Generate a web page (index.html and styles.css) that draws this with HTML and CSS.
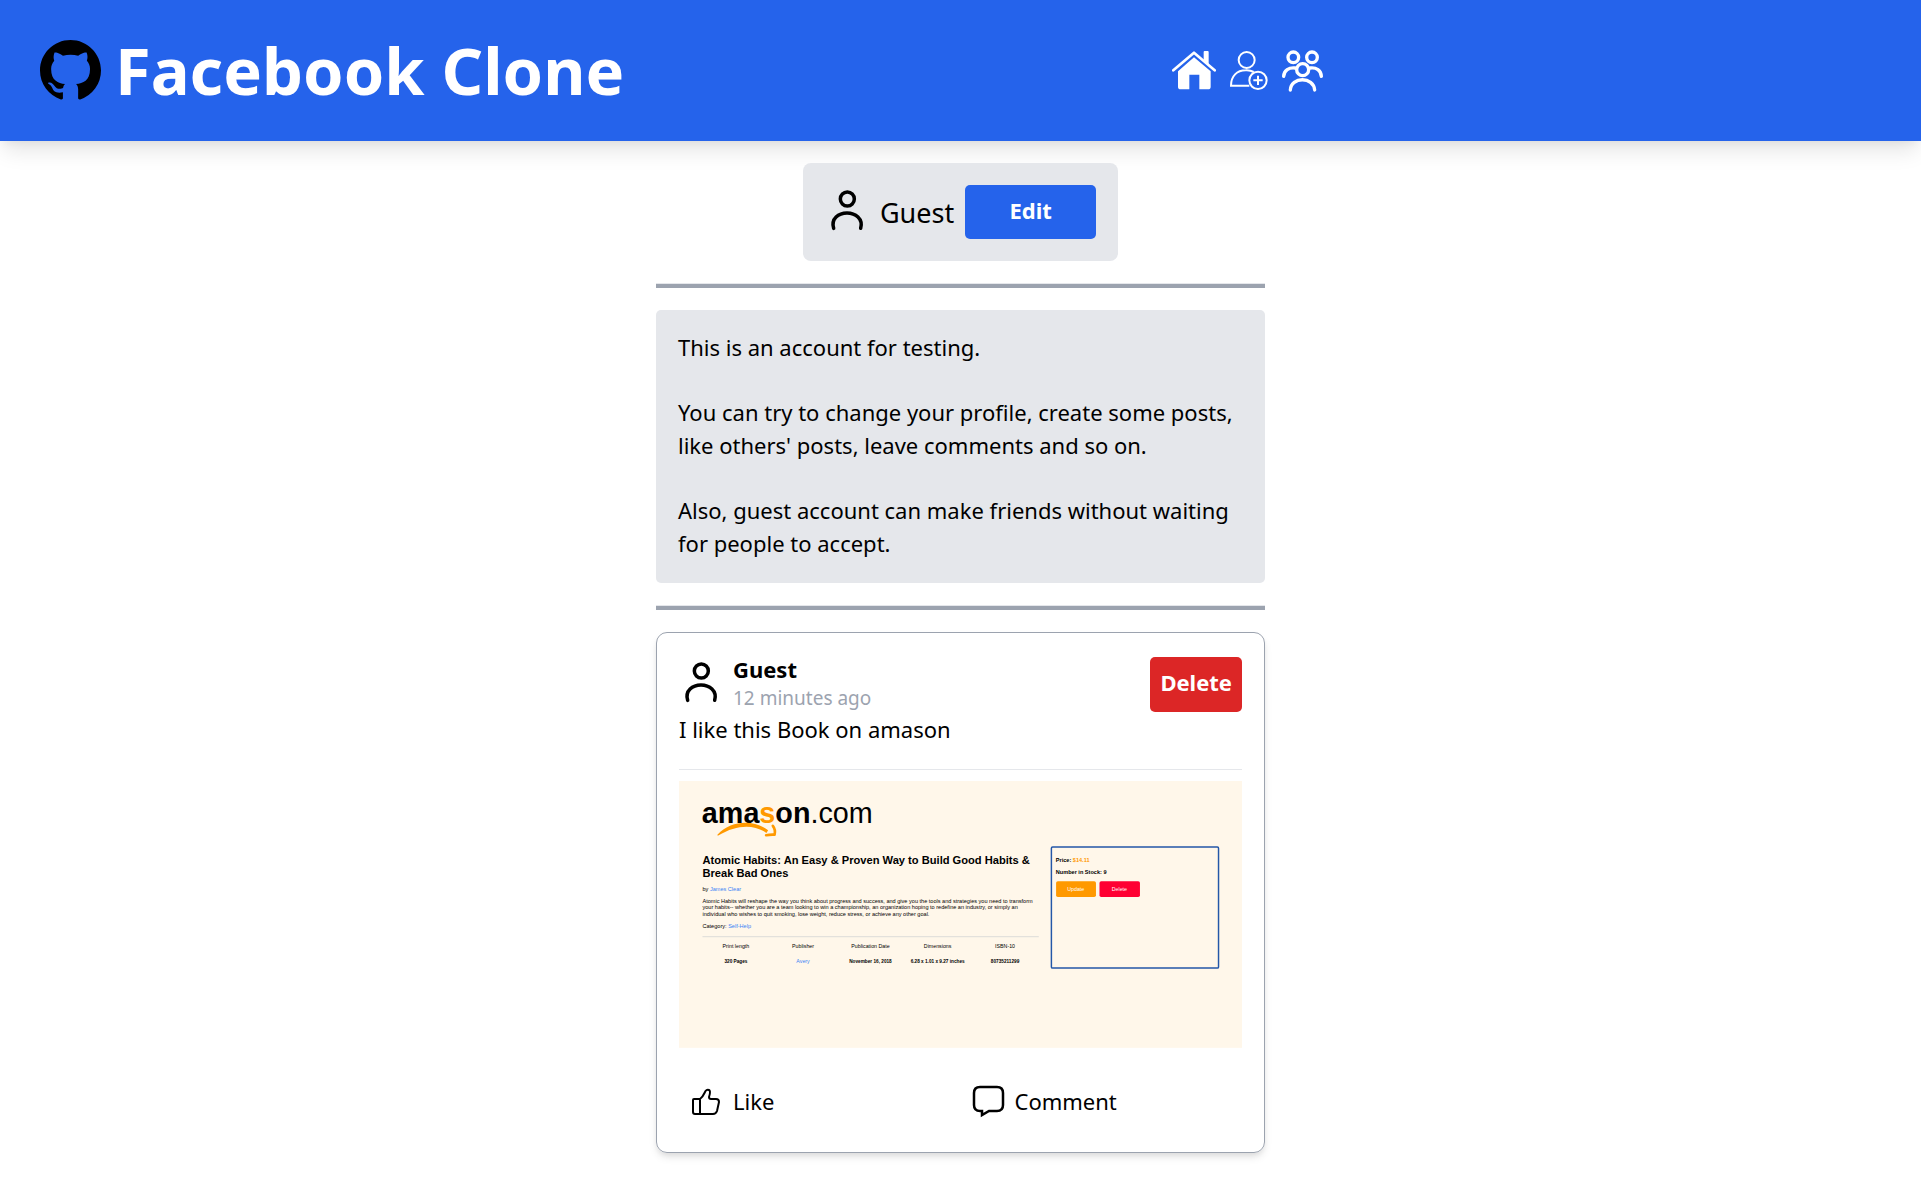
FILE: index.html
```html
<!DOCTYPE html>
<html lang="en">
<head>
<meta charset="utf-8">
<meta name="viewport" content="width=device-width, initial-scale=1">
<title>Facebook Clone</title>
<link rel="stylesheet" href="styles.css">
</head>
<body>
<svg class="defs" aria-hidden="true">
  <symbol id="person" viewBox="105 120 132 132">
    <g fill="none" stroke="currentColor" stroke-width="10.500">
      <circle cx="172" cy="147" r="21"/>
      <path stroke-linecap="round" d="M131 235C122 206 146 189 171 189S220 206 212 235"/>
    </g>
  </symbol>
</svg>
<header class="header">
  <div class="brand">
    <a class="brand-link" href="#" aria-label="GitHub">
      <svg class="brand-logo" viewBox="0 0 16 16" aria-hidden="true"><path d="M8 0C3.580 0 0 3.580 0 8c0 3.540 2.290 6.530 5.470 7.590.4.070.55-.17.55-.38 0-.19-.01-.82-.01-1.490-2.010.37-2.530-.49-2.690-.94-.09-.23-.48-.94-.82-1.130-.28-.15-.68-.52-.01-.53.63-.01 1.080.58 1.230.82.72 1.210 1.870.87 2.330.66.070-.52.28-.87.51-1.070-1.780-.2-3.640-.89-3.640-3.950 0-.87.31-1.590.82-2.150-.08-.2-.36-1.020.08-2.120 0 0 .67-.21 2.200.82.64-.18 1.320-.27 2-.27s1.360.09 2 .27c1.530-1.040 2.200-.82 2.200-.82.44 1.100.16 1.920.08 2.120.51.56.82 1.270.82 2.150 0 3.070-1.870 3.750-3.650 3.950.29.25.54.73.54 1.480 0 1.070-.01 1.930-.01 2.200 0 .21.15.46.55.38A8.010 8.010 0 0 0 16 8c0-4.420-3.580-8-8-8z"/></svg>
    </a>
    <h1 class="brand-title">Facebook Clone</h1>
  </div>
  <nav class="nav" aria-label="Main">
    <a href="#" aria-label="Home">
      <svg class="icon-home" viewBox="66 64 132 120" aria-hidden="true">
        <path d="M70 122L132 69L194 122" fill="none" stroke="currentColor" stroke-width="8" stroke-linecap="round" stroke-linejoin="round"/>
        <path fill="currentColor" d="M161 67q0-3 3-3h9q3 0 3 3v37l-15-13zM132 83l50 42v46q0 8-8 8h-26v-44h-30v44h-26q-8 0-8-8v-46z"/>
      </svg>
    </a>
    <a href="#" aria-label="Add friend">
      <svg class="icon-add" viewBox="239 64 114 120" aria-hidden="true">
        <g fill="none" stroke="currentColor" stroke-width="6">
          <circle cx="289" cy="91" r="24"/>
          <path d="M297 168H242C242 139 260 122 286 122Q299 121 310 127"/>
          <circle cx="323" cy="152" r="26"/>
          <path d="M309 152h28M323 138v28"/>
        </g>
      </svg>
    </a>
    <a href="#" aria-label="Friends">
      <svg class="icon-group" viewBox="396 59 123 126" aria-hidden="true">
        <g fill="none" stroke="currentColor" stroke-width="10" stroke-linecap="round">
          <circle cx="430" cy="81" r="16"/><circle cx="486" cy="81" r="16"/><circle cx="458" cy="118" r="18"/>
          <path d="M421 179C423 138 491 138 494 179M401 138C402 120 417 111 435 113M514 138C513 120 499 111 481 113"/>
        </g>
      </svg>
    </a>
  </nav>
</header>
<main class="main">
  <section class="profile">
    <svg class="avatar" aria-hidden="true"><use href="#person"/></svg>
    <h2 class="profile-name">Guest</h2>
    <button class="button button-edit" type="button">Edit</button>
  </section>
  <hr class="rule">
  <section class="about">
    <p>This is an account for testing.</p>
    <p>You can try to change your profile, create some posts, like others' posts, leave comments and so on.</p>
    <p>Also, guest account can make friends without waiting for people to accept.</p>
  </section>
  <hr class="rule">
  <article class="post">
    <div class="post-head">
      <svg class="avatar" aria-hidden="true"><use href="#person"/></svg>
      <div class="post-meta">
        <h3 class="post-author">Guest</h3>
        <p class="post-time">12 minutes ago</p>
      </div>
      <button class="button button-delete" type="button">Delete</button>
    </div>
    <p class="post-text">I like this Book on amason</p>
    <hr class="post-rule">
    <svg class="post-image" viewBox="0 0 1920 910" role="img" aria-label="Book page on amason.com">
      <rect width="1920" height="910" fill="#fff7ea"/>
      <text class="logo" x="78" y="142"><tspan class="strong">ama<tspan class="orange">s</tspan>on</tspan>.com</text>
      <path fill="#ff9900" d="M131 183C180 132 257 132 304 168L298 177C257 148 198 147 134 186Q130 187 131 183z"/>
      <path fill="none" stroke="#ff9900" stroke-width="9" stroke-linecap="round" stroke-linejoin="round" d="M320 153Q330 166 326 183Q311 182 297 185"/>
      <text class="book-title" x="80" y="284">Atomic Habits: An Easy &amp; Proven Way to Build Good Habits &amp;<tspan x="80" y="326">Break Bad Ones</tspan></text>
      <text class="copy" x="80" y="376">by <tspan class="blue">James Clear</tspan></text>
      <text class="copy" x="80" y="416">Atomic Habits will reshape the way you think about progress and success, and give you the tools and strategies you need to transform<tspan x="80" y="438">your habits-- whether you are a team looking to win a championship, an organization hoping to redefine an industry, or simply an</tspan><tspan x="80" y="460">individual who wishes to quit smoking, lose weight, reduce stress, or achieve any other goal.</tspan></text>
      <text class="copy" x="80" y="503">Category: <tspan class="blue">Self-Help</tspan></text>
      <path d="M80 531H1227" stroke="#e3e1dc" stroke-width="4"/>
      <g class="cells center">
        <text x="194" y="568">Print length</text><text x="423" y="568">Publisher</text><text x="653" y="568">Publication Date</text><text x="882" y="568">Dimensions</text><text x="1112" y="568">ISBN-10</text>
        <text x="423" y="620" class="blue">Avery</text>
        <g class="values strong"><text x="194" y="620">320 Pages</text><text x="653" y="620">November 16, 2018</text><text x="882" y="620">6.28 x 1.01 x 9.27 inches</text><text x="1112" y="620">80735211299</text></g>
      </g>
      <rect x="1270" y="225" width="570" height="413" rx="4" fill="none" stroke="#2457a8" stroke-width="5"/>
      <text class="copy strong" x="1285" y="277">Price: <tspan class="orange">$14.11</tspan></text>
      <text class="copy strong" x="1285" y="318">Number in Stock: 9</text>
      <rect x="1286" y="342" width="136" height="54" rx="6" fill="#ff9900"/>
      <rect x="1434" y="342" width="138" height="54" rx="6" fill="#ff0033"/>
      <g class="cells center white"><text x="1353" y="376">Update</text><text x="1502" y="376">Delete</text></g>
    </svg>
    <div class="actions">
      <button class="action" type="button">
        <svg class="action-icon" viewBox="0 0 33 33" aria-hidden="true"><g fill="none" stroke="currentColor" stroke-width="2" stroke-linejoin="round"><path d="M3 15Q3 14 4 14H10V29H5Q3 29 3 27zM10 14C13 12 14 9 15.500 6Q17 4 19 5Q21 6 19 12Q19 14 21 14H26Q29 14 29 17L27 26Q26 29 23 29H10"/></g></svg>
        Like
      </button>
      <button class="action" type="button">
        <svg class="action-icon" viewBox="0 0 33 33" aria-hidden="true"><path d="M8 2H25Q31 2 31 8V20Q31 26 25 26H17L10 30V26H8Q2 26 2 20V8Q2 2 8 2z" fill="none" stroke="currentColor" stroke-width="2.500"/></svg>
        Comment
      </button>
    </div>
  </article>
</main>
</body>
</html>
```
FILE: styles.css
```css
*, *::before, *::after { box-sizing: border-box; }

body {
  margin: 0;
  background: #fff;
  color: #000;
  font-family: "Noto Sans", sans-serif;
  font-size: 22px;
  line-height: 33px;
}

h1, h2, h3, p { margin: 0; font-size: inherit; }
svg { display: block; flex: none; }
button { font: inherit; color: inherit; border: 0; cursor: pointer; }
.defs { display: none; }

.header {
  display: grid;
  grid-template-columns: 61fr 39fr;
  align-items: center;
  padding: 22px 0;
  background: #2563eb;
  color: #fff;
  box-shadow: 0 14px 20px -4px rgba(0, 0, 0, 0.1), 0 5px 8px -3px rgba(0, 0, 0, 0.05);
}
.brand { display: flex; align-items: center; gap: 14px; padding-left: 40px; }
.brand-link { color: #000; }
.brand-logo { width: 61px; height: 61px; fill: currentColor; }
.brand-title { font-size: 65px; line-height: 97px; font-weight: 700; }
.nav { display: flex; align-items: center; gap: 14px; }
.nav a { color: #fff; }
.icon-home { width: 44px; height: 40px; }
.icon-add { width: 38px; height: 40px; }
.icon-group { width: 41px; height: 42px; }

.main {
  display: flex;
  flex-direction: column;
  align-items: center;
  gap: 22px;
  width: 100%;
  max-width: 653px;
  margin: 0 auto;
  padding: 22px;
}
.avatar { width: 44px; height: 44px; }
.button { border-radius: 5px; color: #fff; font-weight: 700; padding: 9px 10px 12px; }

.profile {
  display: flex;
  align-items: center;
  gap: 11px;
  padding: 22px;
  border-radius: 8px;
  background: #e5e7eb;
}
.profile-name { font-size: 27px; font-weight: 400; }
.button-edit { width: 131px; height: 54px; background: #2563eb; }

.rule {
  width: 100%;
  height: 5px;
  margin: 0;
  border: 0;
  border-top: 1px solid #e5e7eb;
  background: #9ca3af;
}

.about {
  display: flex;
  flex-direction: column;
  gap: 32px;
  width: 100%;
  padding: 21px 22px 23px;
  border-radius: 5px;
  background: #e5e7eb;
}

.post {
  width: 100%;
  padding: 22px 22px 23px;
  border: 1px solid #9ca3af;
  border-radius: 11px;
  box-shadow: 0 5px 8px -1px rgba(0, 0, 0, 0.1), 0 3px 5px -1px rgba(0, 0, 0, 0.06);
}
.post-head { display: flex; align-items: center; gap: 10px; }
.post-meta { flex: 1; }
.post-author { line-height: 29px; font-weight: 700; }
.post-time { font-size: 19px; line-height: 29px; color: #9ca3af; }
.button-delete { height: 55px; background: #dc2626; }
.post-rule { margin: 23px 0 11px; border: 0; border-top: 1px solid #e5e7eb; }
.post-image { width: 100%; height: auto; font-family: "Liberation Sans", Arial, sans-serif; }

.logo { font-size: 98px; }
.book-title { font-size: 38px; font-weight: 700; }
.copy { font-size: 19px; }
.cells { font-size: 18px; }
.values { font-size: 16px; }
.strong { font-weight: 700; }
.center { text-anchor: middle; }
.orange { fill: #ff9900; }
.blue { fill: #3b82f6; }
.white { fill: #fff; }

.actions { display: grid; grid-template-columns: 1fr 1fr; margin-top: 27px; }
.action {
  display: flex;
  align-items: center;
  gap: 10px;
  height: 54px;
  padding: 0 11px;
  background: none;
}
.action-icon { width: 33px; height: 33px; }
```
